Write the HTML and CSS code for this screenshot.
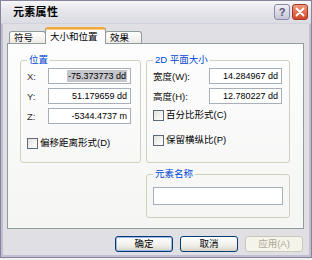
FILE: index.html
```html
<!DOCTYPE html>
<html lang="zh">
<head>
    <title>元素属性</title>
    <link rel="stylesheet" href="styles.css">
</head>
<body>
    <div class="window">
        <div class="titlebar">
            <span class="title">元素属性</span>
            <div class="caption-btns">
                <span class="cap help">?</span>
                <span class="cap close">
                    <svg width="10" height="10" viewBox="0 0 10 10">
                        <path d="M1.5 1.5 L8.5 8.5 M8.5 1.5 L1.5 8.5" stroke="#fff" stroke-width="1.8" stroke-linecap="round"/>
                    </svg>
                </span>
            </div>
        </div>

        <div class="tabs">
            <span class="tab">符号</span>
            <span class="tab active">大小和位置</span>
            <span class="tab">效果</span>
        </div>

        <div class="panel">
            <!-- 位置 -->
            <fieldset class="group pos">
                <legend>位置</legend>
                <div class="row"><span class="lbl">X:</span><span class="field"><span class="hl">-75.373773 dd</span></span></div>
                <div class="row"><span class="lbl">Y:</span><span class="field">51.179659 dd</span></div>
                <div class="row z"><span class="lbl">Z:</span><span class="field">-5344.4737 m</span></div>
                <div class="check offset"><span class="box"></span>偏移距离形式(D)</div>
            </fieldset>

            <div class="right-col">
                <!-- 2D 平面大小 -->
                <fieldset class="group size">
                    <legend>2D 平面大小</legend>
                    <div class="row"><span class="lbl">宽度(W):</span><span class="field">14.284967 dd</span></div>
                    <div class="row"><span class="lbl">高度(H):</span><span class="field">12.780227 dd</span></div>
                    <div class="check pct"><span class="box"></span>百分比形式(C)</div>
                    <div class="check keep"><span class="box"></span>保留横纵比(P)</div>
                </fieldset>

                <!-- 元素名称 -->
                <fieldset class="group name">
                    <legend>元素名称</legend>
                    <span class="field wide"></span>
                </fieldset>
            </div>
        </div>

        <div class="buttons">
            <span class="btn default">确定</span>
            <span class="btn">取消</span>
            <span class="btn disabled">应用(A)</span>
        </div>
    </div>
</body>
</html>
```

FILE: styles.css
```css
* {
    box-sizing: border-box;
}
body {
    margin: 0;
    background: #f2f2f2;
    font-family: "Liberation Sans", "Noto Sans CJK SC", sans-serif;
    font-size: 9.5px;
    color: #000;
}
.window {
    width: 312px;
    height: 258px;
    background: #e0dfe3;
    border: 1px solid #85849c;
    box-shadow: inset 2px 0 0 #c0bfd2, inset -2px 0 0 #c0bfd2, inset 0 -2px 0 #c0bfd2;
}
.titlebar {
    height: 23px;
    display: flex;
    align-items: center;
    justify-content: space-between;
    padding: 0 3px 0 12px;
    background: linear-gradient(#f7f7f9, #e6e6ec 40%, #dcdce4);
    border-bottom: 1px solid #d2d2dc;
}
.title {
    font-weight: bold;
    font-size: 11px;
    line-height: 14px;
    letter-spacing: 0.3px;
}
.caption-btns {
    display: flex;
    gap: 2px;
}
.cap {
    width: 16px;
    height: 16px;
    border-radius: 3px;
    display: flex;
    align-items: center;
    justify-content: center;
}
.help {
    background: linear-gradient(#f0f0f6, #c4c4d6);
    border: 1px solid #8d8ca8;
    color: #55556e;
    font-size: 11px;
    font-weight: bold;
    line-height: 14px;
}
.close {
    background: linear-gradient(#f09a7c, #d2472b);
    border: 1px solid #a03a26;
}
.tabs {
    height: 19px;
    display: flex;
    align-items: flex-end;
    padding-left: 8px;
}
.tab {
    height: 12px;
    padding: 0 4px;
    border: 1px solid #919b9c;
    border-bottom: none;
    border-radius: 3px 3px 0 0;
    background: linear-gradient(#ffffff, #ecebe6);
    line-height: 11px;
    margin-right: -1px;
}
.tab:first-child {
    width: 37px;
}
.tab:last-child {
    width: 37px;
}
.tab.active {
    position: relative;
    z-index: 1;
    height: 17px;
    width: 61px;
    margin-bottom: -1px;
    padding-top: 2px;
    background: #fcfcfe;
    border-top: 2px solid #f3a93e;
    box-shadow: inset 0 1px 0 #ffd27a;
    line-height: 12px;
}
.panel {
    margin-left: 6px;
    width: 297px;
    height: 186px;
    border: 1px solid #919b9c;
    background: linear-gradient(#fdfdfd, #f5f5f4);
    padding: 10px 0 0 12px;
    display: grid;
    grid-template-columns: 121px 144px;
    column-gap: 5px;
    align-items: start;
}
.group {
    margin: 0;
    border: 1px solid #d0d0bf;
    border-radius: 3px;
    padding: 2px 8px 0 6px;
}
.group legend {
    padding: 0 2px;
    color: #0046d5;
    line-height: 12px;
}
.pos {
    height: 109px;
}
.size {
    height: 109px;
    padding-right: 5px;
}
.name {
    height: 50px;
    margin-top: 5px;
    padding: 7px 5px 0 6px;
}
.right-col {
    display: flex;
    flex-direction: column;
}
.row {
    display: flex;
    align-items: center;
    height: 16px;
    margin-bottom: 4px;
}
.row.z {
    margin-top: 1px;
}
.lbl {
    flex: none;
    color: #111;
}
.pos .lbl {
    width: 21px;
    color: #333;
}
.size .lbl {
    width: 56px;
}
.field {
    display: flex;
    justify-content: flex-end;
    align-items: center;
    height: 16px;
    padding-right: 3px;
    border: 1px solid #a7afbb;
    background: #fff;
    font-size: 9px;
    line-height: 12px;
    white-space: nowrap;
}
.pos .field {
    width: 83px;
}
.size .field {
    width: 73px;
}
.field.wide {
    width: 130px;
    height: 18px;
}
.hl {
    background: #c5c5cc;
    padding: 0 1px;
}
.check {
    display: flex;
    align-items: center;
    height: 12px;
    line-height: 12px;
}
.box {
    flex: none;
    width: 11px;
    height: 11px;
    margin-right: 2px;
    border: 1px solid #5b6b7b;
    background: linear-gradient(135deg, #e2e2dc, #ffffff);
}
.offset {
    margin-top: 13px;
}
.pct {
    margin-top: 5px;
}
.keep {
    margin-top: 13px;
}
.buttons {
    display: flex;
    justify-content: flex-end;
    gap: 7px;
    padding: 7px 8px 0 0;
}
.btn {
    width: 58px;
    height: 16px;
    border: 1px solid #003c74;
    border-radius: 3px;
    background: linear-gradient(#ffffff, #f0efea 60%, #d8d4c8);
    display: flex;
    align-items: center;
    justify-content: center;
    line-height: 12px;
}
.btn.default {
    box-shadow: inset 0 0 0 1px #9cb6e8;
}
.btn.disabled {
    border-color: #c9c7ba;
    background: #f5f4ea;
    color: #aca899;
}
```
